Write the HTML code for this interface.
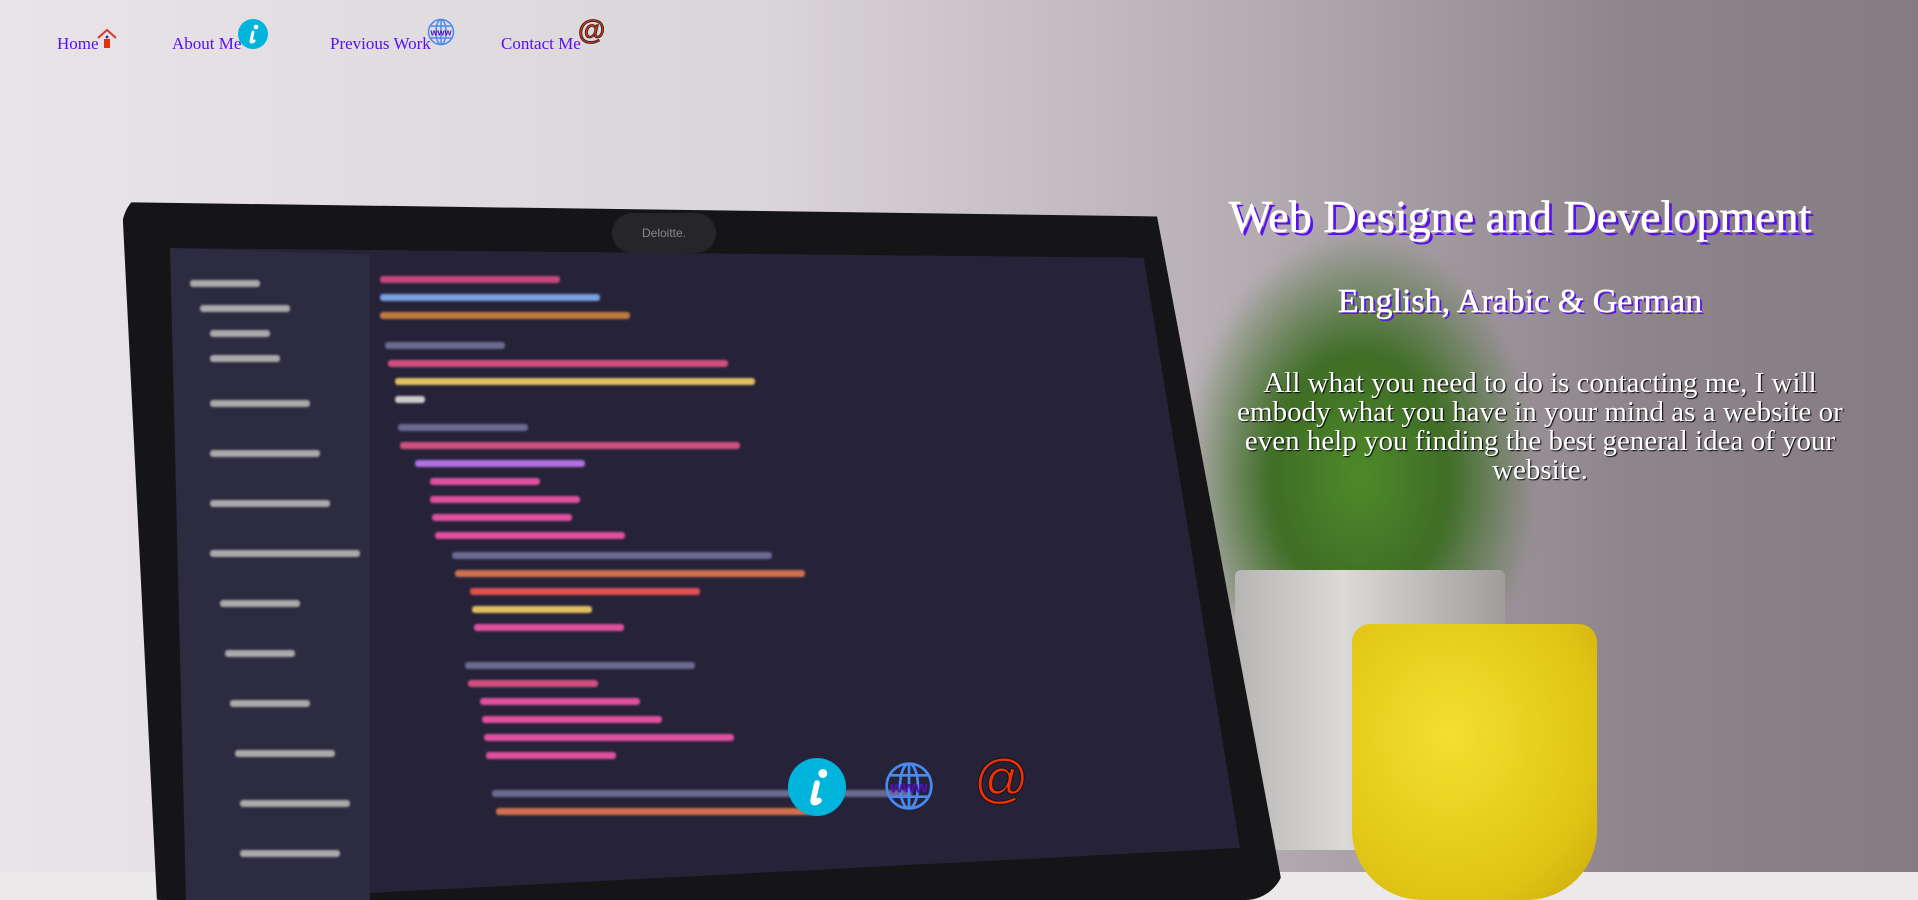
<!DOCTYPE html>
<html><head><meta charset="utf-8"><style>
html,body{margin:0;padding:0;width:1918px;height:900px;overflow:hidden}
body{position:relative;font-family:"Liberation Serif",serif;background:linear-gradient(90deg,#e8e4e8 0%,#dad5d9 40%,#b5adb3 65%,#8e858c 85%,#857b83 100%)}
.abs{position:absolute}
nav a{position:absolute;top:34px;color:#5a10f0;font-size:17px;text-decoration:none}
.bez{left:122px;top:188px;width:1163px;height:712px;background:#151518;clip-path:polygon(0 2%,89% 4%,100% 100%,3% 100%);border-radius:40px}
.scr{left:170px;top:248px;width:1070px;height:652px;background:#262338;clip-path:polygon(0 0,91% 1.5%,100% 92%,6% 100%)}
.side{left:170px;top:248px;width:200px;height:652px;background:#2d2b3f;clip-path:polygon(0 0,100% 1%,100% 100%,8% 100%)}
.ln{position:absolute;height:7px;border-radius:3px;filter:blur(1px)}
.plant{left:1180px;top:230px;width:360px;height:380px;background:radial-gradient(ellipse at 50% 65%,#4f8a2a 0%,#3e6d25 35%,rgba(70,100,50,0) 70%);filter:blur(6px)}
.pot{left:1235px;top:570px;width:270px;height:280px;background:linear-gradient(90deg,#b7b5b4,#dcdad8 40%,#a09d9c);border-radius:6px}
.cup{left:1352px;top:624px;width:245px;height:276px;background:radial-gradient(ellipse at 40% 40%,#f3e030,#e0c415 70%,#c9a80a);border-radius:18px 18px 70px 70px}
.desk{left:0;top:872px;width:1918px;height:28px;background:#ebe9ea}
h1{position:absolute;margin:0;top:190px;left:1200px;width:640px;text-align:center;font-size:46px;font-weight:normal;color:#fff;text-shadow:3px 3px 0 #5a10f0;-webkit-text-stroke:0.6px #fff}
h2{position:absolute;margin:0;top:283px;left:1200px;width:640px;text-align:center;font-size:34px;font-weight:normal;color:#fff;text-shadow:2px 2px 0 #5a10f0;-webkit-text-stroke:0.4px #fff}
p.t{position:absolute;margin:0;top:369px;left:1215px;width:650px;text-align:center;font-size:29px;line-height:29px;color:#fff;text-shadow:1px 1px 1px #000}
</style></head><body>
<div class="abs desk"></div>
<div class="abs plant"></div>
<div class="abs pot"></div>
<div class="abs bez"></div>
<div class="abs scr"></div>
<div class="abs side"></div>
<div class="abs" style="left:612px;top:213px;width:104px;height:40px;border-radius:20px;background:#26262a;color:#888;font:12px 'Liberation Sans',sans-serif;line-height:40px;text-align:center">Deloitte.</div>
<div class="abs" style="left:180px;top:260px;width:900px;height:620px">
<div class="ln" style="left:200px;top:16px;width:180px;background:#c5487a"></div>
<div class="ln" style="left:200px;top:34px;width:220px;background:#7aa0e0"></div>
<div class="ln" style="left:200px;top:52px;width:250px;background:#c07a40"></div>
<div class="ln" style="left:205px;top:82px;width:120px;background:#6b6a90"></div>
<div class="ln" style="left:208px;top:100px;width:340px;background:#d05080"></div>
<div class="ln" style="left:215px;top:118px;width:360px;background:#e0c060"></div>
<div class="ln" style="left:215px;top:136px;width:30px;background:#ccc"></div>
<div class="ln" style="left:218px;top:164px;width:130px;background:#6b6a90"></div>
<div class="ln" style="left:220px;top:182px;width:340px;background:#d05080"></div>
<div class="ln" style="left:235px;top:200px;width:170px;background:#b070e0"></div>
<div class="ln" style="left:250px;top:218px;width:110px;background:#e050a0"></div>
<div class="ln" style="left:250px;top:236px;width:150px;background:#e050a0"></div>
<div class="ln" style="left:252px;top:254px;width:140px;background:#e050a0"></div>
<div class="ln" style="left:255px;top:272px;width:190px;background:#e050a0"></div>
<div class="ln" style="left:272px;top:292px;width:320px;background:#6b6a90"></div>
<div class="ln" style="left:275px;top:310px;width:350px;background:#d07050"></div>
<div class="ln" style="left:290px;top:328px;width:230px;background:#e05050"></div>
<div class="ln" style="left:292px;top:346px;width:120px;background:#e0c060"></div>
<div class="ln" style="left:294px;top:364px;width:150px;background:#e050a0"></div>
<div class="ln" style="left:285px;top:402px;width:230px;background:#6b6a90"></div>
<div class="ln" style="left:288px;top:420px;width:130px;background:#d05080"></div>
<div class="ln" style="left:300px;top:438px;width:160px;background:#e050a0"></div>
<div class="ln" style="left:302px;top:456px;width:180px;background:#e050a0"></div>
<div class="ln" style="left:304px;top:474px;width:250px;background:#e050a0"></div>
<div class="ln" style="left:306px;top:492px;width:130px;background:#e050a0"></div>
<div class="ln" style="left:312px;top:530px;width:420px;background:#6b6a90"></div>
<div class="ln" style="left:316px;top:548px;width:320px;background:#d07050"></div>
<div class="ln" style="left:10px;top:20px;width:70px;background:#aaa"></div>
<div class="ln" style="left:20px;top:45px;width:90px;background:#aaa"></div>
<div class="ln" style="left:30px;top:70px;width:60px;background:#aaa"></div>
<div class="ln" style="left:30px;top:95px;width:70px;background:#aaa"></div>
<div class="ln" style="left:30px;top:140px;width:100px;background:#aaa"></div>
<div class="ln" style="left:30px;top:190px;width:110px;background:#aaa"></div>
<div class="ln" style="left:30px;top:240px;width:120px;background:#aaa"></div>
<div class="ln" style="left:30px;top:290px;width:150px;background:#aaa"></div>
<div class="ln" style="left:40px;top:340px;width:80px;background:#aaa"></div>
<div class="ln" style="left:45px;top:390px;width:70px;background:#aaa"></div>
<div class="ln" style="left:50px;top:440px;width:80px;background:#aaa"></div>
<div class="ln" style="left:55px;top:490px;width:100px;background:#aaa"></div>
<div class="ln" style="left:60px;top:540px;width:110px;background:#aaa"></div>
<div class="ln" style="left:60px;top:590px;width:100px;background:#aaa"></div>
</div>
<div class="abs cup"></div>

<nav>
<a style="left:57px">Home</a>
<svg class="abs" style="left:96px;top:27px" width="22" height="22" viewBox="0 0 22 22"><path d="M2 11 L11 3 L20 11" fill="none" stroke="#d33" stroke-width="2"/><rect x="8" y="12" width="6" height="9" fill="#e03010"/><circle cx="11" cy="10" r="1.5" fill="#248"/></svg>
<a style="left:172px">About Me</a>
<svg class="abs" style="left:238px;top:19px" width="30" height="30" viewBox="0 0 30 30"><circle cx="15" cy="15" r="15" fill="#00b4dc"/><circle cx="18" cy="8" r="2.3" fill="#fff"/><path d="M15 13 L13 22 Q13 24 16 22" fill="none" stroke="#fff" stroke-width="3" stroke-linecap="round"/></svg>
<a style="left:330px">Previous Work</a>
<svg class="abs" style="left:427px;top:18px" width="28" height="28" viewBox="0 0 28 28"><g fill="none" stroke="#4a8af0" stroke-width="1.5"><circle cx="14" cy="14" r="12.5"/><ellipse cx="14" cy="14" rx="5" ry="12.5"/><path d="M14 1.5v25M3 8h22M3 20h22"/></g><text x="14" y="17.5" text-anchor="middle" font-family="Liberation Sans" font-weight="bold" font-size="9" fill="#5010c0">www</text></svg>
<a style="left:501px">Contact Me</a>
<div class="abs" style="left:578px;top:14px;color:#e03010;font:bold 28px 'Liberation Sans',sans-serif;-webkit-text-stroke:0.8px #222">@</div>
</nav>

<h1>Web Designe and Development</h1>
<h2>English, Arabic &amp; German</h2>
<p class="t">All what you need to do is contacting me, I will embody what you have in your mind as a website or even help you finding the best general idea of your website.</p>

<svg class="abs" style="left:788px;top:758px" width="58" height="58" viewBox="0 0 30 30"><circle cx="15" cy="15" r="15" fill="#00b4dc"/><circle cx="18" cy="8" r="2.3" fill="#fff"/><path d="M15 13 L13 22 Q13 24 16 22" fill="none" stroke="#fff" stroke-width="3" stroke-linecap="round"/></svg>
<svg class="abs" style="left:884px;top:761px" width="50" height="50" viewBox="0 0 28 28"><g fill="none" stroke="#4a8af0" stroke-width="1.5"><circle cx="14" cy="14" r="12.5"/><ellipse cx="14" cy="14" rx="5" ry="12.5"/><path d="M14 1.5v25M3 8h22M3 20h22"/></g><text x="14" y="17.5" text-anchor="middle" font-family="Liberation Sans" font-weight="bold" font-size="9" fill="#5010c0">www</text></svg>
<div class="abs" style="left:974px;top:748px;color:#f03008;font:54px 'Liberation Sans',sans-serif;-webkit-text-stroke:1px #111">@</div>
</body></html>
